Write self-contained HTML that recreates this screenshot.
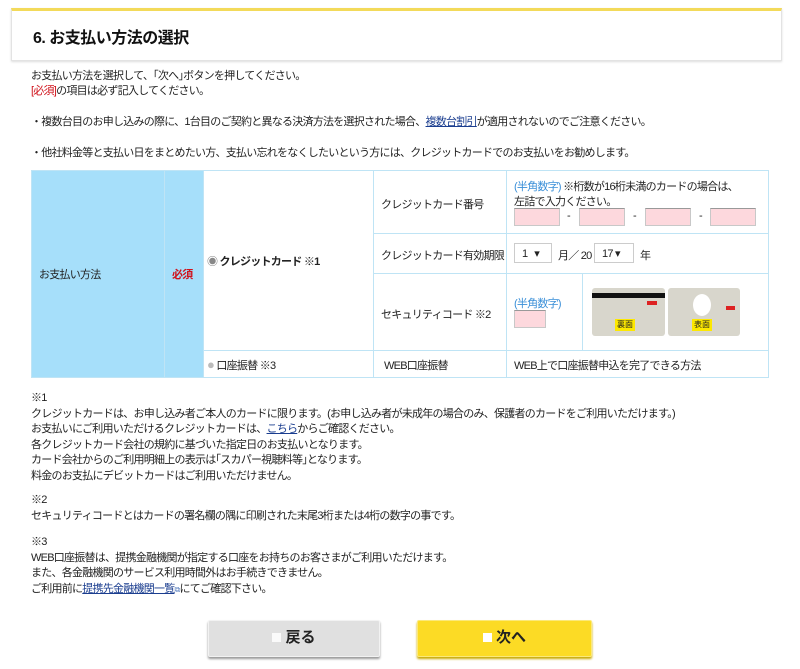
<!DOCTYPE html>
<html><head><meta charset="utf-8"><style>
body{margin:0;width:800px;height:669px;background:#fff;font-family:"Liberation Sans","Noto Sans CJK JP",sans-serif;font-size:11px;color:#222;position:relative;overflow:hidden;letter-spacing:-0.75px}
.a{position:absolute;white-space:nowrap}
.hd{position:absolute;left:11px;top:8px;width:769px;height:49px;border:1px solid #e3e3e3;border-top:3px solid #f3da5a;box-shadow:0 1px 2px #ddd}
.hd span{position:absolute;left:21px;top:13px;font-size:16px;font-weight:bold;color:#111;letter-spacing:-0.5px}
.red{color:#d0121b}
a{color:#1a3d8f;text-decoration:underline}
.c{position:absolute;border:1px solid #bfe4f5;box-sizing:border-box}
.inp{position:absolute;background:#fdd8dd;border:1px solid #c8c8c8;border-top-color:#999;box-sizing:border-box}
.sel{position:absolute;height:20px;border:1px solid #ccc;background:#fff;box-sizing:border-box;font-size:11px;padding:3px 0 0 7px}
.blue{color:#3a8fd8}
.btn{position:absolute;top:620px;width:172px;height:37px;box-sizing:border-box;font-size:15px;font-weight:bold;text-align:center;line-height:34px;border-radius:2px;letter-spacing:0}
.sq{display:inline-block;width:9px;height:9px;background:#fff;margin-right:4px;vertical-align:0}
</style></head><body>
<div class="hd"><span>6. お支払い方法の選択</span></div>
<div class="a" style="left:31px;top:67px">お支払い方法を選択して、｢次へ｣ボタンを押してください。</div>
<div class="a" style="left:31px;top:82px"><span class="red">[必須]</span>の項目は必ず記入してください。</div>
<div class="a" style="left:31px;top:113px">・複数台目のお申し込みの際に、1台目のご契約と異なる決済方法を選択された場合、<a>複数台割引</a>が適用されないのでご注意ください。</div>
<div class="a" style="left:31px;top:144px">・他社料金等と支払い日をまとめたい方、支払い忘れをなくしたいという方には、クレジットカードでのお支払いをお勧めします。</div>

<div class="c" style="left:31px;top:170px;width:134px;height:208px;background:#a6dffa"></div>
<div class="a" style="left:39px;top:266px">お支払い方法</div>
<div class="c" style="left:164px;top:170px;width:40px;height:208px;background:#a6dffa"></div>
<div class="a red" style="left:172px;top:266px;font-weight:bold">必須</div>
<div class="c" style="left:203px;top:170px;width:171px;height:181px"></div>
<div class="c" style="left:203px;top:350px;width:171px;height:28px"></div>
<div class="c" style="left:373px;top:170px;width:134px;height:64px"></div>
<div class="c" style="left:373px;top:233px;width:134px;height:41px"></div>
<div class="c" style="left:373px;top:273px;width:134px;height:78px"></div>
<div class="c" style="left:373px;top:350px;width:134px;height:28px"></div>
<div class="c" style="left:506px;top:170px;width:263px;height:64px"></div>
<div class="c" style="left:506px;top:233px;width:263px;height:41px"></div>
<div class="c" style="left:506px;top:273px;width:77px;height:78px"></div>
<div class="c" style="left:582px;top:273px;width:187px;height:78px"></div>
<div class="c" style="left:506px;top:350px;width:263px;height:28px"></div>

<div class="a" style="left:207px;top:253px;font-weight:bold"><span style="color:#888">◉</span> クレジットカード ※1</div>
<div class="a" style="left:207px;top:357px"><span style="color:#bbb;font-size:13px">●</span> 口座振替 ※3</div>
<div class="a" style="left:381px;top:196px">クレジットカード番号</div>
<div class="a" style="left:381px;top:247px">クレジットカード有効期限</div>
<div class="a" style="left:381px;top:306px">セキュリティコード ※2</div>
<div class="a" style="left:384px;top:357px">WEB口座振替</div>
<div class="a" style="left:514px;top:357px">WEB上で口座振替申込を完了できる方法</div>
<div class="a" style="left:514px;top:178px"><span class="blue">(半角数字)</span> ※桁数が16桁未満のカードの場合は、</div>
<div class="a" style="left:514px;top:193px">左詰で入力ください。</div>
<div class="inp" style="left:514px;top:208px;width:46px;height:18px"></div>
<div class="a" style="left:567px;top:210px">-</div>
<div class="inp" style="left:579px;top:208px;width:46px;height:18px"></div>
<div class="a" style="left:633px;top:210px">-</div>
<div class="inp" style="left:645px;top:208px;width:46px;height:18px"></div>
<div class="a" style="left:699px;top:210px">-</div>
<div class="inp" style="left:710px;top:208px;width:46px;height:18px"></div>
<div class="sel" style="left:514px;top:243px;width:38px">1 &nbsp;&nbsp;▾</div>
<div class="a" style="left:558px;top:247px">月／ 20</div>
<div class="sel" style="left:594px;top:243px;width:40px">17 ▾</div>
<div class="a" style="left:640px;top:247px">年</div>
<div class="a" style="left:514px;top:295px"><span class="blue">(半角数字)</span></div>
<div class="inp" style="left:514px;top:310px;width:32px;height:18px"></div>
<div style="position:absolute;left:592px;top:288px;width:73px;height:48px;background:#d8d6cc;border-radius:3px">
<div style="position:absolute;left:0;top:5px;width:73px;height:5px;background:#111"></div>
<div style="position:absolute;left:55px;top:13px;width:10px;height:4px;background:#d22"></div>
<div style="position:absolute;left:23px;top:31px;width:20px;height:12px;background:#fde800;font-size:8px;text-align:center;line-height:12px;letter-spacing:0">裏面</div></div>
<div style="position:absolute;left:668px;top:288px;width:72px;height:48px;background:#d8d6cc;border-radius:3px">
<div style="position:absolute;left:25px;top:6px;width:18px;height:22px;background:#fff;border-radius:50%"></div>
<div style="position:absolute;left:58px;top:18px;width:9px;height:4px;background:#d22"></div>
<div style="position:absolute;left:24px;top:31px;width:20px;height:12px;background:#fde800;font-size:8px;text-align:center;line-height:12px;letter-spacing:0">表面</div></div>

<div class="a" style="left:31px;top:391px;line-height:15.5px">※1<br>クレジットカードは、お申し込み者ご本人のカードに限ります。(お申し込み者が未成年の場合のみ、保護者のカードをご利用いただけます。)<br>お支払いにご利用いただけるクレジットカードは、<a>こちら</a>からご確認ください。<br>各クレジットカード会社の規約に基づいた指定日のお支払いとなります。<br>カード会社からのご利用明細上の表示は｢スカパー視聴料等｣となります。<br>料金のお支払にデビットカードはご利用いただけません。</div>
<div class="a" style="left:31px;top:493px;line-height:15.5px">※2<br>セキュリティコードとはカードの署名欄の隅に印刷された末尾3桁または4桁の数字の事です。</div>
<div class="a" style="left:31px;top:535px;line-height:15.5px">※3<br>WEB口座振替は、提携金融機関が指定する口座をお持ちのお客さまがご利用いただけます。<br>また、各金融機関のサービス利用時間外はお手続きできません。<br>ご利用前に<a>提携先金融機関一覧</a><span style="color:#5a7fbf;font-size:8px">⧉</span>にてご確認下さい。</div>

<div class="btn" style="left:208px;background:#e0e0e0;border:1px solid #f2f2f2;box-shadow:0 2px 2px #999"><span class="sq" style="background:#fafafa"></span>戻る</div>
<div class="btn" style="left:417px;width:175px;background:#fcdb25;border:1px solid #fbe97a;box-shadow:0 2px 2px #c9a800"><span class="sq"></span>次へ</div>
</body></html>
